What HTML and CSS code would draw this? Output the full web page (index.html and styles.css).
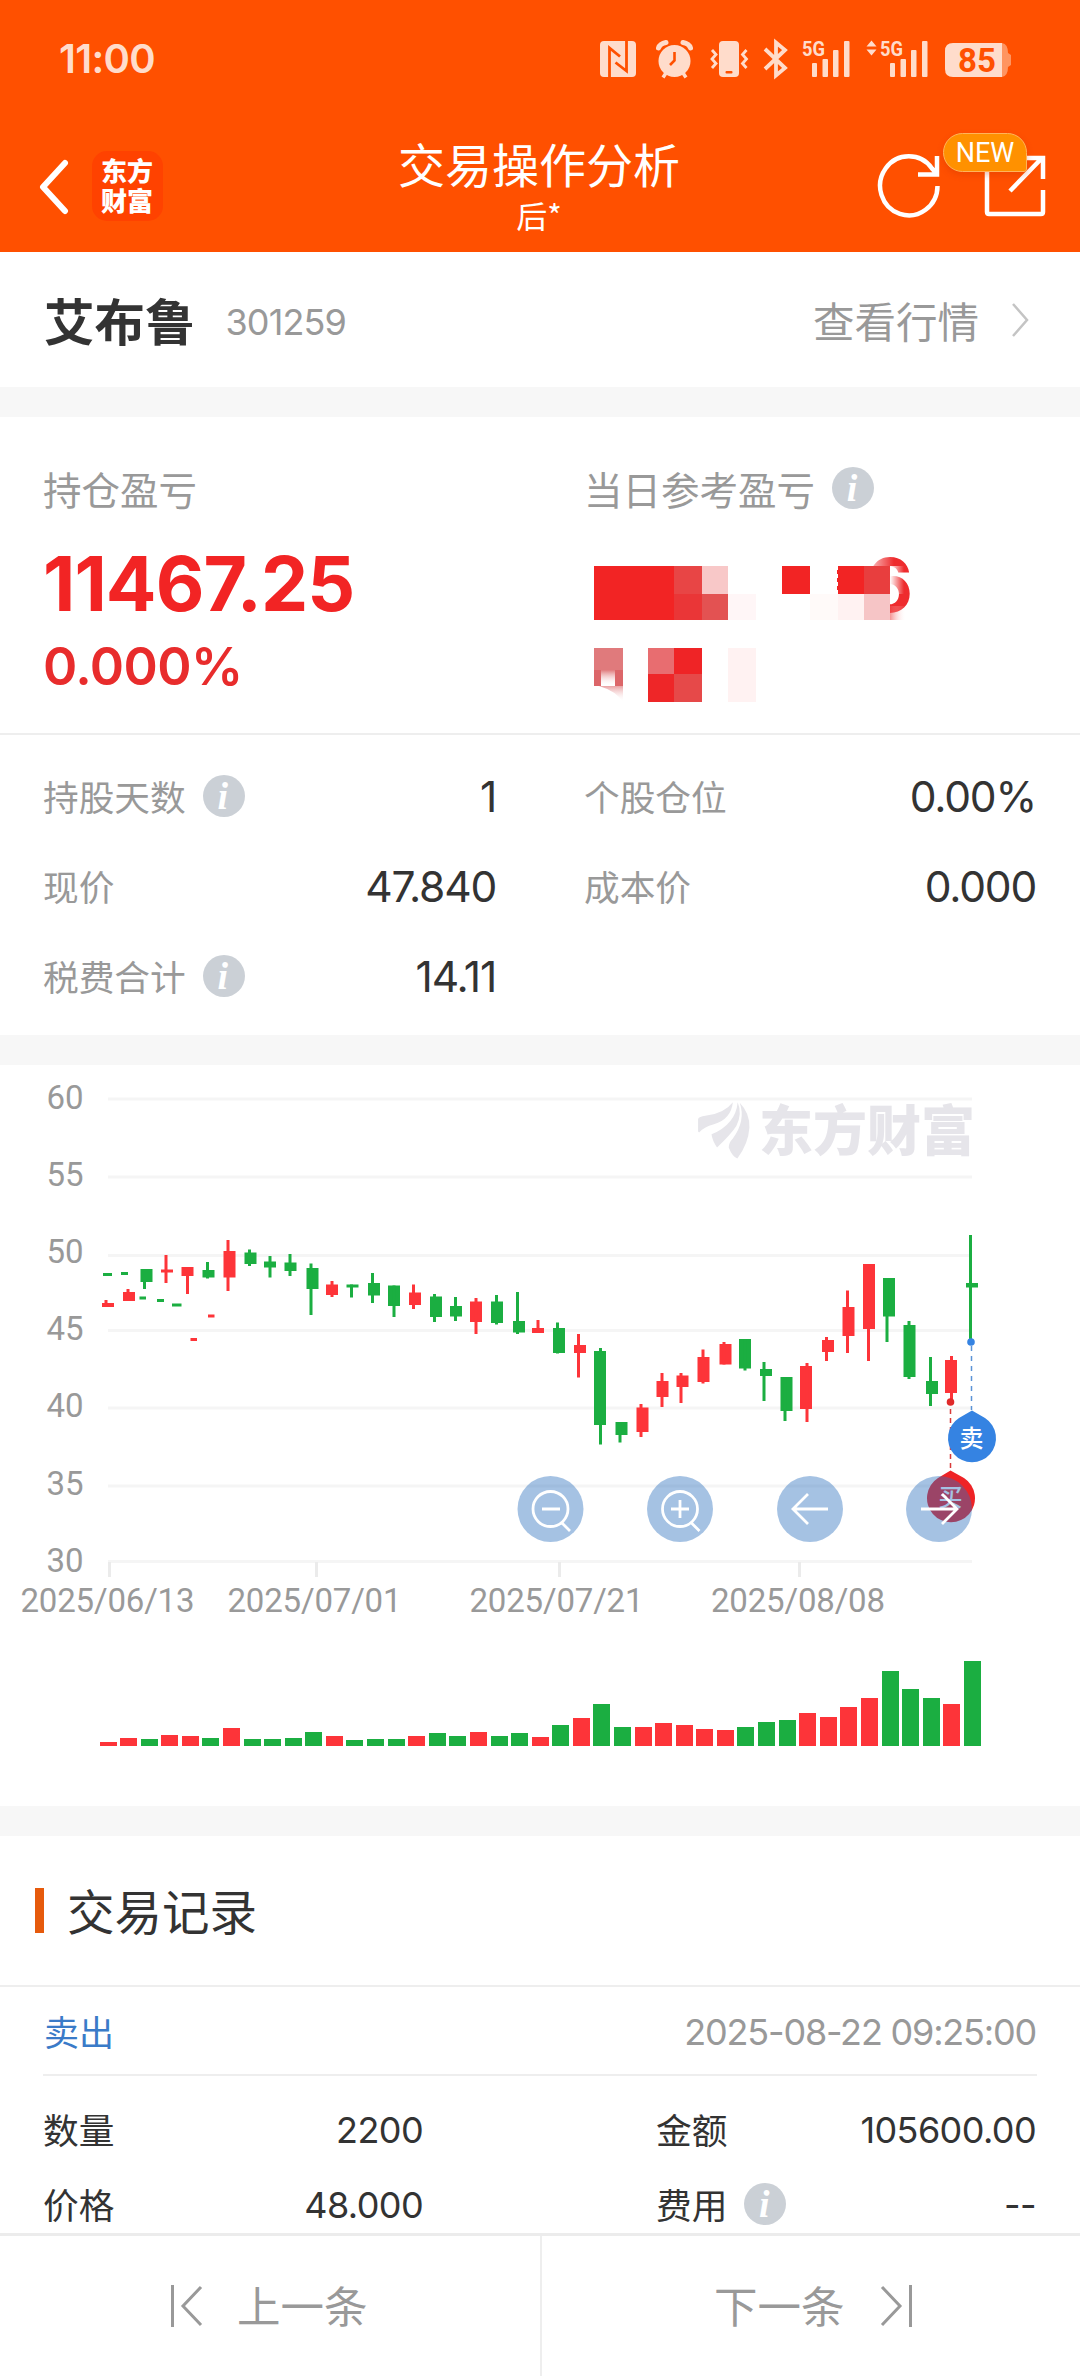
FILE: index.html
```html
<!DOCTYPE html>
<html lang="zh-CN">
<head>
<meta charset="utf-8">
<title>交易操作分析</title>
<link rel="stylesheet" href="styles.css">
</head>
<body>
<header class="header">
  <div class="status">
    <span class="clock">11:00</span>
    <svg class="status-icons" width="420" height="46" viewBox="596 36 420 46" fill="#ffdccb">
      <rect x="600" y="41" width="36" height="36" rx="4"/>
      <path d="M609.500 77V48L620 56.500M615.500 62.500L626.500 71V41" fill="none" stroke="#ff5000" stroke-width="2.800"/>
      <circle cx="674.500" cy="61" r="16"/>
      <path d="M658.500 48Q660 43.500 666 42.500M690.500 48Q689 43.500 683 42.500" fill="none" stroke="#ffdccb" stroke-width="5" stroke-linecap="round"/>
      <path d="M666 73L663 77.500M683 73L686 77.500" stroke="#ffdccb" stroke-width="3.500"/>
      <path d="M674.500 52V60.500L670 65" fill="none" stroke="#ff5000" stroke-width="2.600"/>
      <rect x="719" y="41" width="20" height="36" rx="4"/>
      <rect x="725.500" y="71" width="7" height="2.500" rx="1" fill="#ff5000"/>
      <path d="M712 50L716 54.500L712 59L716 63.500L712 68M746.500 50L742.500 54.500L746.500 59L742.500 63.500L746.500 68" fill="none" stroke="#ffdccb" stroke-width="2.800"/>
      <path d="M765 49L785 68L776 75.500V42.500L785 50L765 69" fill="none" stroke="#ffdccb" stroke-width="3.800"/>
      <text x="802" y="55.500" class="net" textLength="23" lengthAdjust="spacingAndGlyphs">5G</text>
      <rect x="812" y="63" width="5" height="14" rx="1"/><rect x="822.500" y="59" width="5.500" height="18" rx="1"/><rect x="833" y="50" width="5.500" height="27" rx="1"/><rect x="844" y="41" width="5.500" height="36" rx="1"/>
      <path d="M871.500 40.500L876.500 46.500H866.500ZM871.500 55.500L876.500 49.500H866.500Z"/>
      <text x="880" y="55.500" class="net" textLength="23" lengthAdjust="spacingAndGlyphs">5G</text>
      <rect x="890" y="63" width="5" height="14" rx="1"/><rect x="900.500" y="59" width="5.500" height="18" rx="1"/><rect x="911" y="50" width="5.500" height="27" rx="1"/><rect x="922" y="41" width="5.500" height="36" rx="1"/>
      <path d="M1002 43Q1008 44 1008 53L1011 55V65L1008 67Q1008 76 1002 77Z" fill="#ff9460"/>
      <path d="M953 43H1002V77H953Q945 77 945 69V51Q945 43 953 43Z"/>
      <text x="977" y="72" text-anchor="middle" class="battery">85</text>
    </svg>
  </div>
  <div class="nav">
    <svg class="back" width="32" height="56" viewBox="0 0 32 56"><path d="M27 4L5 28L27 52" fill="none" stroke="#fff" stroke-width="6" stroke-linecap="round" stroke-linejoin="round"/></svg>
    <div class="logo">东方财富</div>
    <div class="title"><h1>交易操作分析</h1><p>后*</p></div>
    <svg class="refresh" width="66" height="70" viewBox="876 151 66 70" fill="none" stroke="#fff" stroke-width="4.500"><path d="M937.500 186A28.700 29.500 0 1 1 932 168.500L937 174M937 156V174.500H918"/></svg>
    <div class="share">
      <svg width="62" height="64" viewBox="984 154 62 64" fill="none" stroke="#fff" stroke-width="4.500"><path d="M987 160V212Q987 214 989 214H1041Q1043 214 1043 212V190M1010 191L1042 158M1024 158H1043V179"/></svg>
      <span class="badge">NEW</span>
    </div>
  </div>
</header>

<section class="stock">
  <h2>艾布鲁</h2><span class="code num">301259</span>
  <a class="quote">查看行情</a>
  <svg width="20" height="36" viewBox="0 0 20 36"><path d="M2 2L16 18L2 34" fill="none" stroke="#c4c4c4" stroke-width="2.500"/></svg>
</section>

<section class="profit">
  <div class="total">
    <div class="label">持仓盈亏</div>
    <div class="amount num">11467.25</div>
    <div class="rate num">0.000%</div>
  </div>
  <div class="today">
    <div class="label">当日参考盈亏<i class="info">i</i></div>
    <svg class="mosaic" width="350" height="160" viewBox="584 550 350 160">
      <defs>
        <linearGradient id="fadeRight"><stop offset="0" stop-color="#fff"/><stop offset="1" stop-color="#fff" stop-opacity="0"/></linearGradient>
        <linearGradient id="pinkRight"><stop offset="0" stop-color="#ef4a4c"/><stop offset="1" stop-color="#fff" stop-opacity="0"/></linearGradient>
        <linearGradient id="pinkDown" x2="0" y2="1"><stop offset="0" stop-color="#e07a7c"/><stop offset="1" stop-color="#fff" stop-opacity="0"/></linearGradient>
      </defs>
      <text x="913" y="612" text-anchor="end" class="digit">6</text>
      <rect x="860" y="552" width="34" height="14" fill="url(#fadeRight)"/>
      <rect x="860" y="566" width="30" height="54" fill="#fff"/>
      <rect x="890" y="566" width="14" height="28" fill="url(#fadeRight)"/>
      <rect x="890" y="606" width="16" height="14" fill="url(#pinkRight)" opacity=".6"/>
      <rect x="594" y="566" width="80" height="54" fill="#f22424"/>
      <rect x="674" y="566" width="28" height="28" fill="#e84545"/><rect x="674" y="594" width="28" height="26" fill="#ea3637"/>
      <rect x="702" y="566" width="26" height="28" fill="#f8c8c8"/><rect x="702" y="594" width="26" height="26" fill="#e35252"/>
      <rect x="728" y="594" width="28" height="26" fill="#fff6f7"/>
      <rect x="782" y="566" width="28" height="28" fill="#f22424"/>
      <path d="M837 572h3M837 580h3M837 588h3" stroke="#f22424" stroke-width="4"/>
      <rect x="838" y="566" width="26" height="28" fill="#f22424"/><rect x="864" y="566" width="26" height="28" fill="#e83e3e"/>
      <rect x="810" y="594" width="28" height="26" fill="#fffaf9"/><rect x="838" y="594" width="26" height="26" fill="#fff2f2"/><rect x="864" y="594" width="26" height="26" fill="#f6c5c6"/>
      <rect x="594" y="648" width="29" height="22" fill="#e07a7c"/>
      <path d="M594 670H601V686H594ZM615 670H623V686H615Z" fill="#dc6669"/>
      <rect x="601" y="670" width="14" height="16" fill="url(#pinkDown)"/>
      <path d="M599 686H623V702Q616 691 599 686Z" fill="url(#pinkDown)" opacity=".7"/>
      <rect x="648" y="648" width="26" height="26" fill="#e86d70"/><rect x="674" y="648" width="28" height="26" fill="#ef2426"/>
      <rect x="648" y="674" width="26" height="28" fill="#ee2628"/><rect x="674" y="674" width="28" height="28" fill="#e64949"/>
      <rect x="728" y="648" width="28" height="54" fill="#fff2f2"/>
    </svg>
  </div>
</section>

<section class="stats">
  <div class="cell"><span>持股天数</span><i class="info">i</i><b class="num">1</b></div>
  <div class="cell"><span>个股仓位</span><b class="num">0.00%</b></div>
  <div class="cell"><span>现价</span><b class="num">47.840</b></div>
  <div class="cell"><span>成本价</span><b class="num">0.000</b></div>
  <div class="cell"><span>税费合计</span><i class="info">i</i><b class="num">14.11</b></div>
</section>

<section class="chart">
  <svg width="1080" height="741" viewBox="0 5 1080 741">
    <g id="grid"></g>
    <g fill="#e6e5ea">
      <g transform="translate(540 0) scale(.3444 .3571)">
        <path d="M459 200V165Q462 158 480 156Q535 150 560 118Q555 165 505 180Q475 188 462 203Z"/>
        <path d="M498 208Q568 180 574 118Q588 150 570 185Q555 208 514 245Q500 225 498 208Z"/>
        <path d="M580 120Q610 150 608 190Q605 235 573 276Q558 270 548 245Q548 232 560 220Q598 170 580 120Z"/>
      </g>
      <text x="759" y="90.500" class="watermark" textLength="216" lengthAdjust="spacingAndGlyphs">东方财富</text>
    </g>
    <g id="candles"></g>
    <g id="volume"></g>
    <path d="M971.500 286V350" stroke="#5b93d6" stroke-width="1.500" stroke-dasharray="5 5"/>
    <circle cx="971" cy="282" r="3.800" fill="#3583e2"/>
    <path d="M950.500 349V412" stroke="#d83a3a" stroke-width="1.500" stroke-dasharray="5 4"/>
    <circle cx="950.500" cy="342" r="3.800" fill="#e02a2a"/>
    <g class="pin">
      <path d="M972 350.500L985 358A24 24 0 1 1 959 358Z" fill="#3583e2"/><text x="971.500" y="387">卖</text>
      <path d="M950.500 410.500L964 418A24 24 0 1 1 938 418Z" fill="#ee2326"/><text x="950.500" y="446">买</text>
    </g>
    <g class="controls">
      <circle cx="550.500" cy="449" r="33"/><circle cx="680" cy="449" r="33"/><circle cx="810" cy="449" r="33"/><circle cx="939" cy="449" r="33"/>
      <path d="M568 449A17.500 17.500 0 1 1 533 449A17.500 17.500 0 1 1 568 449M562 463L570 471M542 449H560"/>
      <path d="M697.500 449A17.500 17.500 0 1 1 662.500 449A17.500 17.500 0 1 1 697.500 449M691.500 463L699.500 471M671 449H689M680 440V458"/>
      <path d="M828 449H793M808 434L793 449L808 464"/>
      <path d="M921 449H957M942 434L957 449L942 464"/>
    </g>
  </svg>
</section>

<section class="records">
  <h2 class="heading"><span>交易记录</span></h2>
  <div class="record-head"><span>卖出</span><time class="num">2025-08-22 09:25:00</time></div>
  <div class="record-body">
    <div class="item"><span>数量</span><b class="num">2200</b></div>
    <div class="item"><span>金额</span><b class="num">105600.00</b></div>
    <div class="item"><span>价格</span><b class="num">48.000</b></div>
    <div class="item"><span>费用</span><i class="info">i</i><b class="num">--</b></div>
  </div>
</section>

<footer class="pager">
  <button class="prev"><svg width="34" height="44" viewBox="0 0 34 44"><path d="M2.500 1V43M31 3L13 22L31 41"/></svg><span>上一条</span></button>
  <button class="next"><span>下一条</span><svg width="34" height="44" viewBox="0 0 34 44"><path d="M31.500 1V43M3 3L21 22L3 41"/></svg></button>
</footer>
<script src="chart.js"></script>
</body>
</html>
```
FILE: styles.css
```css
* { box-sizing: border-box; margin: 0; padding: 0; }
body { width: 1080px; height: 2376px; overflow: hidden; display: flex; flex-direction: column; background: #f7f7f7; color: #333; font-family: "Noto Sans CJK SC", sans-serif; }
section { background: #fff; flex: none; }
.num { font-family: Inter, "Noto Sans CJK SC", sans-serif; font-weight: 400; }
.info { width: 42px; height: 42px; flex: none; margin: 0 0 2px 17px; padding-right: 2px; border-radius: 50%; background: #cbd0d6; color: #fff; font: italic bold 38px/42px "Liberation Serif", serif; text-align: center; }

.header { height: 252px; flex: none; background: #ff5000; color: #fff; }
.status { height: 118px; padding: 0 64px 0 59px; display: flex; align-items: center; justify-content: space-between; }
.clock { font: 600 40px Inter, sans-serif; color: #ffdccb; letter-spacing: -.700px; padding-bottom: 2px; }
.net { font: bold 20px Roboto, sans-serif; }
.battery { font: bold 33px Roboto, sans-serif; fill: #ff5000; }
.nav { height: 134px; display: flex; align-items: flex-start; padding: 0 34px 0 38px; }
.back { margin-top: 41px; }
.logo { width: 71px; height: 70px; margin: 33px 0 0 22px; padding: 4px 9px; border-radius: 15px; background: #ff4200; font-size: 26px; font-weight: 900; line-height: 30px; }
.title { flex: 1; margin-left: 64px; text-align: center; width: 0; padding: 13px 0 0 0; }
.title h1 { font-size: 47px; font-weight: 400; line-height: 64px; white-space: nowrap; }
.title p { font-size: 31px; line-height: 40px; }
.refresh { margin: 33px 42px 0 25px; }
.share { position: relative; margin-top: 36px; height: 64px; width: 62px; }
.badge { position: absolute; left: -41px; top: -21px; width: 84px; height: 39px; border: 1px solid #ffb45a; border-radius: 20px 20px 3px 20px; background: #ff9100; box-shadow: 0 3px 6px rgba(200,50,0,.3); font: 27px/39px Roboto, sans-serif; text-align: center; }

.stock { height: 135px; margin-bottom: 30px; display: flex; align-items: center; padding: 0 49px 0 44px; }
.stock h2 { font-size: 50.500px; font-weight: 700; line-height: 60px; padding-bottom: 1px; }
.code { font-size: 36px; color: #999; margin-left: 30px; letter-spacing: -.900px; line-height: 50px; padding-top: 4px; }
.quote { margin-left: auto; margin-right: 32px; font-size: 41.500px; color: #999; line-height: 50px; }

.profit { height: 318px; border-bottom: 2px solid #eee; padding: 48px 0 0 43px; display: flex; }
.total { width: 541px; flex: none; }
.today { flex: 1; }
.today .info { margin-bottom: 0; }
.label { display: flex; align-items: center; height: 46px; margin-bottom: 2px; font-size: 38.500px; color: #999; line-height: 46px; }
.amount { font-size: 75px; font-weight: 700; color: #f22424; line-height: 80px; margin-top: 33px; letter-spacing: -.900px; }
.rate { font-size: 52px; font-weight: 600; color: #e82c2c; line-height: 60px; margin-top: 13px; letter-spacing: -.600px; }
.mosaic { display: block; margin-top: 39px; }
.digit { font: bold 74px Inter, sans-serif; fill: #ee2c2e; }

.stats { height: 300px; margin-bottom: 30px; padding: 17px 44px 13px 43px; display: grid; grid-template-columns: 453px 452px; column-gap: 88px; grid-auto-rows: 90px; }
.cell { display: flex; align-items: center; font-size: 35.700px; color: #999; }
.cell > span, .item > span { padding-bottom: 3px; }
.cell b { margin-left: auto; font-size: 42.500px; line-height: 50px; letter-spacing: -1.200px; color: #333; }

.chart { height: 741px; margin-bottom: 30px; }
.chart svg { display: block; }
.axis { font: 33px Roboto, sans-serif; fill: #999; }
.watermark { font: 900 54px "Noto Sans CJK SC", sans-serif; }
.pin text { font: 500 24px "Noto Sans CJK SC", sans-serif; fill: #fff; text-anchor: middle; }
.controls circle { fill: rgba(46,114,190,.43); }
.controls path { fill: none; stroke: #fff; stroke-width: 2.800; }

.records { height: 397px; }
.heading { height: 149px; display: flex; align-items: center; padding-left: 35px; font-size: 47.500px; font-weight: 400; }
.heading::before { content: ""; width: 9px; height: 45px; background: #e65a0c; margin-right: 23px; }
.heading span { padding-bottom: 2px; }
.record-head { height: 91px; padding: 0 44px; border-top: 2px solid #eee; display: flex; align-items: center; justify-content: space-between; font-size: 35px; color: #3a7bc8; position: relative; }
.record-head::after { content: ""; position: absolute; left: 43px; right: 43px; bottom: 0; height: 2px; background: #eee; }
.record-head > span { padding-bottom: 3px; }
.record-head time { color: #999; font-size: 36px; letter-spacing: -1.200px; }
.record-body { display: grid; grid-template-columns: 380px 380px; justify-content: space-between; padding: 16px 44px 0 43px; grid-auto-rows: 75px; }
.item { display: flex; align-items: center; font-size: 35.700px; }
.item b { margin-left: auto; font-size: 36px; line-height: 50px; letter-spacing: -.600px; }

.pager { height: 143px; flex: none; background: #fff; border-top: 3px solid #ececec; display: flex; }
.pager button { width: 540px; border: 0; background: none; font: 43.500px "Noto Sans CJK SC", sans-serif; color: #999; display: flex; align-items: center; }
.pager svg { fill: none; stroke: #999; stroke-width: 3; flex: none; }
.pager span { padding-bottom: 4px; }
.pager .prev { width: 542px; flex: none; padding-left: 170px; gap: 33px; border-right: 2px solid #eee; }
.pager .next { padding-left: 172px; gap: 34px; }
```
FILE: chart.js
```js
const RED = '#fd3439', GREEN = '#1bae41';
// [color, center x, body top, body bottom, high, low, wick offset]
const candles = [
  ['r',108,243,247,240,247,-2],['r',129,232,241,229,241,-1],['g',146.5,209,222,209,229,-2],['r',167,209.5,212.5,195,223,-1],
  ['r',187.5,207,216,207,234,0],['g',208.5,210,217.5,202,218.5,-1],['r',229.5,191,217.5,180,231,-1.5],['g',250.5,192.5,204,189.5,206,-1],
  ['g',270,201.5,207.5,196,217.5,0],['g',290.5,202.5,211,194,216,-.5],['g',312.5,208,229,203.5,255,-1.5],['r',332,224.5,235,221,237,0],
  ['g',352.5,224.5,227.5,224.5,237.5,-1],['g',374,223,235.5,213,243,-1.5],['g',394,225.5,246,225.5,257,0],['r',415,232.5,245,224.5,249,-1.5],
  ['g',436,236.5,257,234,262,-1.5],['g',456,246,256.5,237,261,-.5],['r',476,241.5,262,238,274,0],['g',497,241.5,263,235,264.5,-.5],
  ['g',519,261,272.5,232,274,-1.5],['r',538,268,273,260,273,0],['g',559,268,293,262.5,293.5,-1.5],['r',580,285,293,274,317.5,-1.5],
  ['g',600,291,365,288,384.5,.5],['g',621.5,362,375,362,382.5,-1.5],['r',642.5,347.5,372,344,377,-1.5],['r',662.5,321,337,313,347,-.5],
  ['r',682.5,315.5,327,313,343,-1.5],['r',703.5,297,322,289.5,323.5,-.5],['r',725.5,284,304.5,282,304.5,-1.5],['g',745,279,308.5,279,310.5,0],
  ['g',766,309,316,302,341,-2],['g',786.5,317,351,317,361,-1.5],['r',806,306,349,303,362,1],['r',828,280,292,277,301,-1.5],
  ['r',848.5,247,276,230.5,293,-1],['r',869,204,269,204,301,-.5],['g',889,218,256.5,218,282,-2],['g',909.5,265,317,261,319,-.5],
  ['g',932,321,334,297,346,-1.5],['r',951,300,333,296,339,.5],['g',972,223,227.5,175,279.5,-1.5]
];
// [color, left, width, center y]
const dashes = [
  ['g',103,9,214.5],['g',121,7,213.5],['g',139.5,6.5,238],['g',157,7,240.5],['g',172,9.5,245],['r',208,6.5,256],['r',190.5,6.5,279.5]
];
const volumes = [4,8,7,11,10,8,18,7,7,8,14,10,6,7,7,10,13,10,14,10,13,9,21,28,42,19,19,23,21,17,16,19,24,26,33,29,39,48,75,57,48,42,85];

const color = c => c === 'r' ? RED : GREEN;
const rect = (x, y, w, h, f) => `<rect x="${x}" y="${y}" width="${w}" height="${h}" fill="${f}"/>`;
const label = (x, y, s, extra) => `<text class="axis" x="${x}" y="${y}" ${extra}>${s}</text>`;

let grid = '';
[39, 117, 195.5, 270.5, 348, 426, 501.5].forEach((y, i) => {
  grid += rect(108, y - 1.5, 864, 3, '#f5f5f5');
  grid += label(83.5, [48.5, 125.7, 202.5, 279.6, 357, 434.6, 512][i], 60 - i * 5, 'text-anchor="end"');
});
[[109.5, 22, '2025/06/13'], [316.5, 229, '2025/07/01'], [559.5, 471, '2025/07/21'], [799.5, 712.5, '2025/08/08']].forEach(([x, lx, s]) => {
  grid += rect(x - 1.5, 502, 3, 15, '#ebebeb');
  grid += label(lx - 1.5, 552, s, 'textLength="174"');
});
document.getElementById('grid').innerHTML = grid;

document.getElementById('candles').innerHTML = candles.map(([c, x, top, bottom, hi, lo, dx]) =>
  rect(x - 6, top, 12, Math.max(bottom - top, 3), color(c)) + rect(x + dx - 1.5, hi, 3, lo - hi, color(c))
).join('') + dashes.map(([c, x, w, y]) => rect(x, y - 1.5, w, 3, color(c))).join('');

document.getElementById('volume').innerHTML = volumes.map((h, i) =>
  rect(Math.round(107.5 + i * 20.58 - 8), 686 - h, 17, h, color(candles[i][0]))
).join('');
```
